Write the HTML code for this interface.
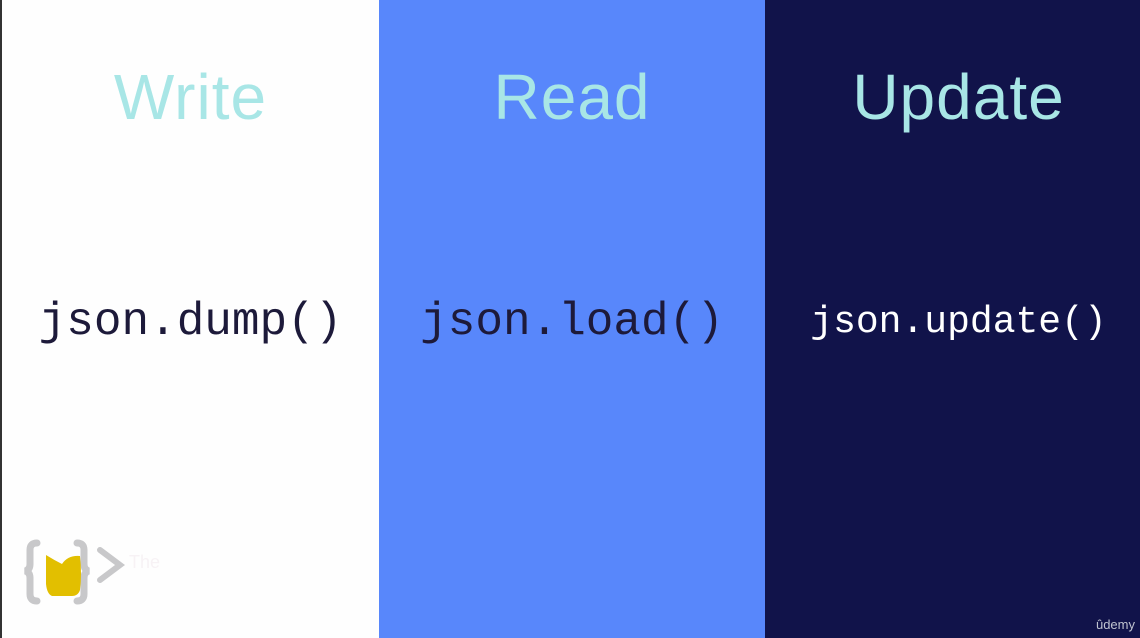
<!DOCTYPE html>
<html><head><meta charset="utf-8"><style>
body{margin:0;width:1140px;height:638px;overflow:hidden;position:relative;font-family:"Liberation Sans",sans-serif}
.p{position:absolute;top:0;height:638px}
.t{position:absolute;width:100%;text-align:center;top:60px;font-size:64px;color:#a8e6e6;letter-spacing:1px}
.c{position:absolute;width:100%;text-align:center;font-family:"Liberation Mono",monospace;color:#1d1a3a}
</style></head><body>
<div class="p" style="left:0;width:2px;background:#333"></div>
<div class="p" style="left:2px;width:377px;background:#fefefe">
 <div class="t" style="left:0">Write</div>
 <div class="c" style="top:296px;font-size:46px">json.dump()</div>
 <svg style="position:absolute;left:20px;top:534px" width="140" height="80" viewBox="0 0 140 80">
  <path d="M15 9 Q8 9 8 16 L8 30 Q8 36 3 37 Q8 38 8 44 L8 60 Q8 67 15 67" fill="none" stroke="#c8c8ca" stroke-width="7" stroke-linecap="round"/>
  <path d="M55 9 Q62 9 62 16 L62 30 Q62 36 67 37 Q62 38 62 44 L62 60 Q62 67 55 67" fill="none" stroke="#c8c8ca" stroke-width="7" stroke-linecap="round"/>
  <path d="M78 16 L98 31 L78 46" fill="none" stroke="#c8c8ca" stroke-width="6" stroke-linecap="round"/>
  <path d="M24 21 Q32 26 40 30 Q46 21 58 22 Q60 40 58 56 Q56 62 50 62 L30 62 Q25 60 24 50 Z" fill="#e2bf00"/>
  <text x="107" y="34" font-size="18" fill="#f7f2f5" font-family="Liberation Sans">The</text>
 </svg>
</div>
<div class="p" style="left:379px;width:386px;background:#5887fb">
 <div class="t">Read</div>
 <div class="c" style="top:296px;font-size:46px">json.load()</div>
</div>
<div class="p" style="left:765px;width:375px;background:#11134a">
 <div class="t" style="left:6px">Update</div>
 <div class="c" style="top:301px;font-size:38px;color:#fff;left:6px">json.update()</div>
 <div style="position:absolute;right:5px;bottom:6px;font-size:13px;color:#c0c4d0">ûdemy</div>
</div>
</body></html>
